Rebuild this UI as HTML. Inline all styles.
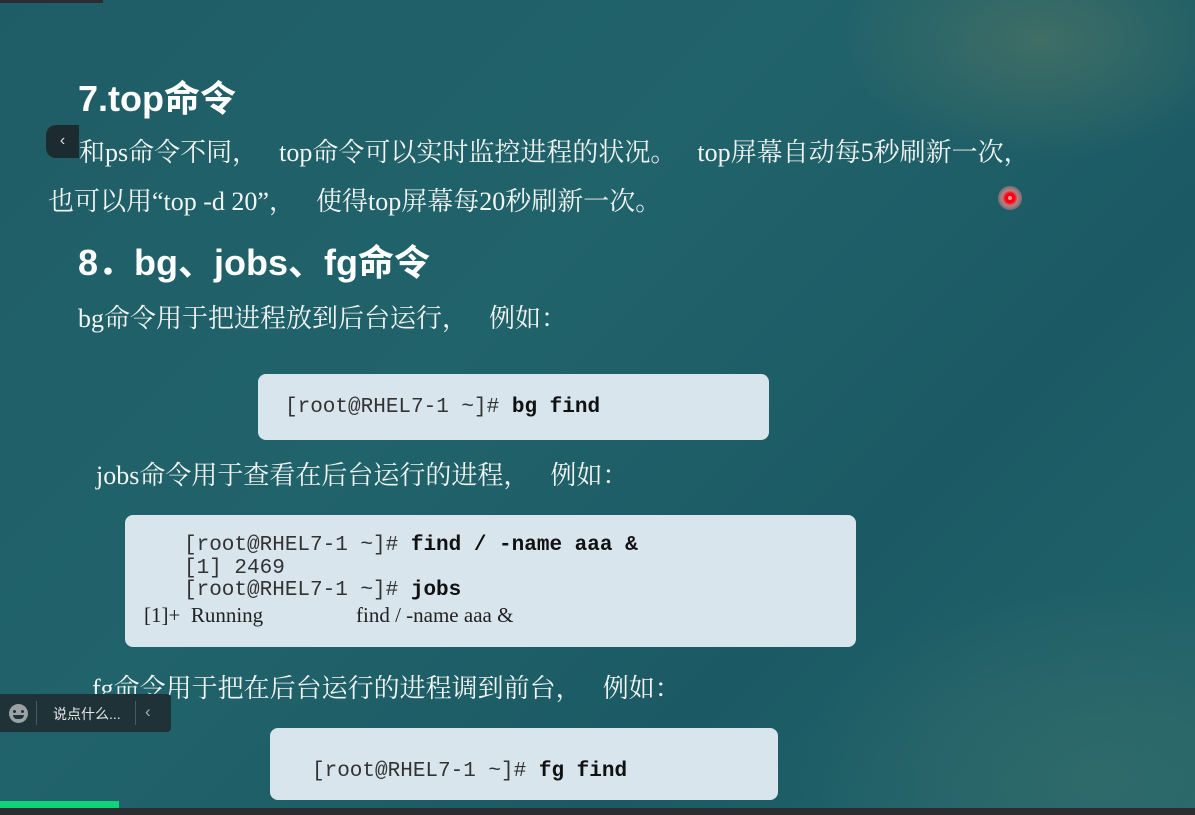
<!DOCTYPE html>
<html><head><meta charset="utf-8"><style>
body{margin:0;width:1195px;height:815px;overflow:hidden;position:relative;
background:radial-gradient(ellipse 200px 120px at 1040px 40px,#3f6e66 0%,rgba(31,94,102,0) 100%),radial-gradient(ellipse 300px 200px at 1100px 780px,#2f6a6a 0%,rgba(31,94,102,0) 100%),linear-gradient(135deg,#1f5d66 0%,#21636b 40%,#1b5a64 70%,#22666c 100%);
font-family:"Liberation Serif","Noto Serif CJK SC",serif;color:#f2f4f2}
.a{position:absolute;white-space:nowrap}
.h{font-family:"Liberation Sans","Noto Sans CJK SC",sans-serif;font-weight:bold;font-size:36px;color:#fff}
.t{font-size:26px}
.p{font-style:normal;padding-right:21px}
.box{position:absolute;background:#d8e5ed;border-radius:8px}
.m{position:absolute;font-family:"Liberation Mono",monospace;font-size:21px;color:#333;white-space:pre;line-height:22.5px}
.m b{color:#111}
</style></head><body>
<div class="a" style="left:0;top:0;width:103px;height:3px;background:#2a2d30"></div>
<div class="a h" style="left:78px;top:70px">7.top命令</div>
<div class="a" style="left:46px;top:125px;width:33px;height:33px;background:#1c2b30;border-radius:10px 0 0 10px;color:#ddd;font-family:'Liberation Sans',sans-serif;font-size:16px;text-align:center;line-height:31px">‹</div>
<div class="a t" style="left:79px;top:132px">和ps命令不同<span class="p">，</span>top命令可以实时监控进程的状况<span class="p">。</span>top屏幕自动每5秒刷新一次<span class="p">，</span></div>
<div class="a t" style="left:48px;top:181px">也可以用“top -d 20”<span class="p">，</span>使得top屏幕每20秒刷新一次<span class="p">。</span></div>
<div class="a" style="left:998px;top:186px;width:24px;height:24px;border-radius:50%;background:radial-gradient(circle,#ff0010 0 28%,rgba(240,140,140,.75) 45%,rgba(240,140,140,0) 100%)"></div>
<div class="a" style="left:1008px;top:196px;width:4px;height:4px;border-radius:50%;background:#f99"></div>
<div class="a h" style="left:78px;top:234px">8．bg、jobs、fg命令</div>
<div class="a t" style="left:78px;top:298px">bg命令用于把进程放到后台运行<span class="p">，</span>例如<span class="p">：</span></div>
<div class="box" style="left:258px;top:374px;width:511px;height:66px"></div>
<div class="m" style="left:285px;top:397px">[root@RHEL7-1 ~]# <b>bg find</b></div>
<div class="a t" style="left:96px;top:455px">jobs命令用于查看在后台运行的进程<span class="p">，</span>例如<span class="p">：</span></div>
<div class="box" style="left:125px;top:515px;width:731px;height:132px"></div>
<div class="m" style="left:184px;top:535px">[root@RHEL7-1 ~]# <b>find / -name aaa &amp;</b>
[1] 2469
[root@RHEL7-1 ~]# <b>jobs</b></div>
<div class="a" style="left:144px;top:603px;font-size:21px;color:#222">[1]+&nbsp; Running</div>
<div class="a" style="left:356px;top:603px;font-size:21px;color:#222">find / -name aaa &amp;</div>
<div class="a t" style="left:92px;top:668px">fg命令用于把在后台运行的进程调到前台<span class="p">，</span>例如<span class="p">：</span></div>
<div class="a" style="left:0;top:694px;width:171px;height:38px;background:#1e3237;border-radius:0 4px 4px 0"></div>
<div class="a" style="left:9px;top:704px;width:19px;height:19px;border-radius:50%;background:#9aa2a4"></div>
<div class="a" style="left:13px;top:710px;width:3px;height:3px;border-radius:50%;background:#1e3237"></div>
<div class="a" style="left:21px;top:710px;width:3px;height:3px;border-radius:50%;background:#1e3237"></div>
<div class="a" style="left:13px;top:715px;width:11px;height:4px;border-radius:0 0 6px 6px;background:#1e3237"></div>
<div class="a" style="left:36px;top:701px;width:1px;height:24px;background:#4a5a5e"></div>
<div class="a" style="left:53px;top:704px;font-family:'Liberation Sans','Noto Sans CJK SC',sans-serif;font-size:14px;color:#e6e9ea">说点什么...</div>
<div class="a" style="left:135px;top:701px;width:1px;height:24px;background:#4a5a5e"></div>
<div class="a" style="left:145px;top:702px;font-family:'Liberation Sans',sans-serif;font-size:17px;color:#aab">‹</div>
<div class="box" style="left:270px;top:728px;width:508px;height:72px"></div>
<div class="m" style="left:312px;top:761px">[root@RHEL7-1 ~]# <b>fg find</b></div>
<div class="a" style="left:0;top:801px;width:119px;height:7px;background:#0fd27a"></div>
<div class="a" style="left:0;top:808px;width:1195px;height:7px;background:#2b2d30"></div>
</body></html>
